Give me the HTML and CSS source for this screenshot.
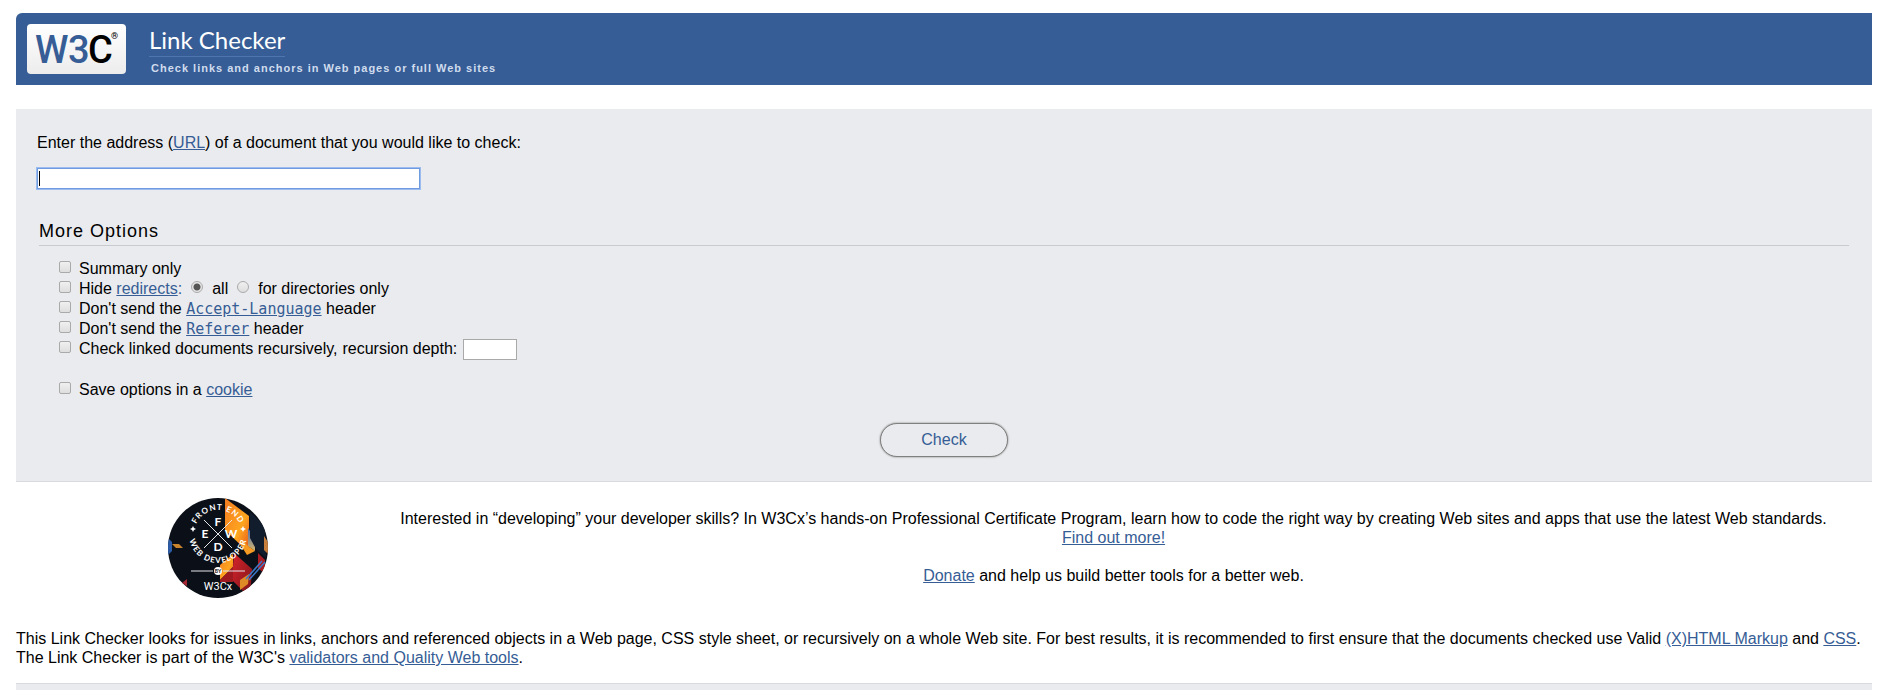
FILE: index.html
```html
<!DOCTYPE html>
<html lang="en">
<head>
  <meta charset="UTF-8">
  <title>W3C Link Checker</title>
  <link rel="stylesheet" href="styles.css">
</head>
<body>
  <header class="banner">
    <a class="logo" href="#" aria-label="W3C">
      <svg width="99" height="50" viewBox="0 0 99 50">
        <text class="logo-blue" x="8" y="39">W</text>
        <text class="logo-blue" x="41" y="39">3</text>
        <text class="logo-black" x="61" y="39">C</text>
        <text class="logo-reg" x="84" y="15">®</text>
      </svg>
    </a>
    <div class="heading">
      <h1><a href="#">Link Checker</a></h1>
      <p class="tagline">Check links and anchors in Web pages or full Web sites</p>
    </div>
  </header>

  <main>
    <form class="panel">
      <p class="address">
        <label for="uri">Enter the address (<a href="#">URL</a>) of a document that you would like to check:</label>
      </p>
      <input class="uri" type="text" id="uri">

      <fieldset class="options">
        <legend>More Options</legend>
        <div class="option">
          <input type="checkbox" id="summary">
          <label for="summary">Summary only</label>
        </div>
        <div class="option">
          <input type="checkbox" id="hide">
          <label for="hide">Hide <a href="#">redirects</a><span class="colon">:</span></label>
          <input type="radio" name="hide_type" id="hide_all" checked>
          <label for="hide_all">all</label>
          <input type="radio" name="hide_type" id="hide_dir">
          <label for="hide_dir">for directories only</label>
        </div>
        <div class="option">
          <input type="checkbox" id="no_lang">
          <label for="no_lang">Don't send the <a href="#"><code>Accept-Language</code></a> header</label>
        </div>
        <div class="option">
          <input type="checkbox" id="no_referer">
          <label for="no_referer">Don't send the <a href="#"><code>Referer</code></a> header</label>
        </div>
        <div class="option">
          <input type="checkbox" id="recursive">
          <label for="recursive">Check linked documents recursively,</label>
          <label class="depth-label" for="depth">recursion depth:</label>
          <input class="depth" type="text" id="depth">
        </div>
        <div class="option cookie">
          <input type="checkbox" id="cookie">
          <label for="cookie">Save options in a <a href="#">cookie</a></label>
        </div>
      </fieldset>

      <button class="submit" type="submit">Check</button>
    </form>

    <section class="promo">
      <a class="badge" href="#" aria-label="Front End Web Developer by W3Cx">
        <svg width="100" height="100" viewBox="0 0 100 100">
          <defs>
            <clipPath id="disc"><circle cx="50" cy="50" r="50"/></clipPath>
            <linearGradient id="flame" x1="0" y1="0" x2="1" y2="1">
              <stop offset="0" stop-color="#f47b20"/>
              <stop offset="0.6" stop-color="#ffa51f"/>
              <stop offset="1" stop-color="#e2501c"/>
            </linearGradient>
            <linearGradient id="sky" x1="0" y1="0" x2="0" y2="1">
              <stop offset="0" stop-color="#3d6bb5"/>
              <stop offset="1" stop-color="#d9b46a"/>
            </linearGradient>
            <linearGradient id="ruby" x1="0" y1="0" x2="1" y2="1">
              <stop offset="0" stop-color="#d8232a"/>
              <stop offset="1" stop-color="#7a141b"/>
            </linearGradient>
            <path id="ring-top" d="M26 36 A24 24 0 0 1 74 36"/>
            <path id="ring-bottom" d="M21 32 V36 A29 29 0 0 0 79 36 V32"/>
          </defs>
          <g clip-path="url(#disc)">
            <rect width="100" height="100" fill="#0b1018"/>
            <polygon points="57,0 81,18 81,55 57,32" fill="url(#flame)"/>
            <polygon points="80,30 87,40 87,53 80,48" fill="url(#sky)"/>
            <polygon points="82,14 97,28 98,60 88,51 82,40" fill="#111c2d"/>
            <polygon points="96,38 100,44 100,56 96,52" fill="#c87f3c"/>
            <polygon points="72,40 80,48 87,53 79,57 72,46" fill="#f59a23"/>
            <polygon points="52,67 65,56 65,69 52,82" fill="url(#flame)"/>
            <polygon points="66,55 84,71 82,100 64,82" fill="url(#ruby)"/>
            <polygon points="52,82 65,69 65,84 52,84" fill="#9e1920"/>
            <polygon points="90,55 97,62 97,76 90,70" fill="#a81d24"/>
            <polygon points="72,82 81,76 80,86 72,92" fill="#dd8a27"/>
            <path d="M78 81 L94 63 M81 82 L97 64" stroke="#3c78c8" stroke-width="1.500"/>
            <polygon points="0,40 4,44 4,53 0,57" fill="#2d5da8"/>
            <polygon points="4,46 11,46 15,50 8,50" fill="#c8842c"/>
            <polygon points="14,85 19,81 19,88" fill="#a32733"/>
            <path d="M36 22 L64 50 M64 22 L36 50 M23 73 H45 M55 73 H77" stroke="#e4e6ea" stroke-width="1"/>
            <circle cx="50" cy="73" r="4" fill="#fff"/>
            <polygon points="25,28 26,30 28,31 26,32 25,34 24,32 22,31 24,30" fill="#fff"/>
            <polygon points="75,28 76,30 78,31 76,32 75,34 74,32 72,31 74,30" fill="#fff"/>
          </g>
          <g class="badge-text">
            <text class="badge-ring"><textPath href="#ring-top" startOffset="50%">FRONT END</textPath></text>
            <text class="badge-ring"><textPath href="#ring-bottom" startOffset="50%">WEB DEVELOPER</textPath></text>
            <text class="badge-letter" x="50" y="28">F</text>
            <text class="badge-letter" x="37" y="40">E</text>
            <text class="badge-letter" x="63" y="40">W</text>
            <text class="badge-letter" x="50" y="53">D</text>
            <text class="badge-by" x="50" y="75">BY</text>
            <text class="badge-brand" x="50" y="92">W3Cx</text>
          </g>
        </svg>
      </a>
      <div class="promo-text">
        <p>Interested in “developing” your developer skills? In W3Cx’s hands-on Professional Certificate Program, learn how to code the right way by creating Web sites and apps that use the latest Web standards. <a href="#">Find out more!</a></p>
        <p><a href="#">Donate</a> and help us build better tools for a better web.</p>
      </div>
    </section>

    <p class="intro">
      This Link Checker looks for issues in links, anchors and referenced objects in a Web page, CSS style sheet, or recursively on a whole Web site. For best results, it is recommended to first ensure that the documents checked use Valid <a href="#">(X)HTML Markup</a> and <a href="#">CSS</a>. The Link Checker is part of the W3C's <a href="#">validators and Quality Web tools</a>.
    </p>
  </main>

  <footer class="footer"></footer>
</body>
</html>
```
FILE: styles.css
```css
* {
  box-sizing: border-box;
}

body {
  display: flex;
  flex-direction: column;
  min-height: 100vh;
  margin: 0;
  padding: 13px 15px 0 16px;
  background: #fff;
  color: #000;
  font-family: "Liberation Sans", Arial, sans-serif;
  font-size: 16px;
  line-height: 19px;
}

p {
  margin: 0;
}

a {
  color: #365d95;
}

/* banner */
.banner {
  display: flex;
  gap: 23px;
  height: 72px;
  padding: 11px;
  background: #365d95;
  border-top-left-radius: 6px;
}

.logo {
  flex: none;
  width: 99px;
  height: 50px;
  border-radius: 4px;
  background: linear-gradient(#fff, #ececec);
}

.logo svg {
  display: block;
}

.logo text {
  font-family: Roboto, sans-serif;
  font-size: 38px;
  font-weight: 500;
}

.logo .logo-blue {
  fill: #365d95;
}

.logo .logo-reg {
  font-size: 9px;
}

h1 {
  width: max-content;
  margin: 0;
  border-bottom: 1px solid #4f75ac;
  font-family: Lato, sans-serif;
  font-size: 24px;
  font-weight: normal;
  line-height: 32px;
}

h1 a {
  color: #fff;
  text-decoration: none;
}

.tagline {
  padding: 2px 0 0 2px;
  color: #d0dcee;
  font-size: 11px;
  font-weight: bold;
  letter-spacing: 1px;
}

/* form */
.panel {
  margin-top: 24px;
  padding: 24px 21px;
  background: #eaebee;
  border-bottom: 1px solid #d9dade;
}

.uri {
  display: block;
  width: 383px;
  height: 21px;
  margin: 16px 0 0;
  padding: 1px 2px;
  border: 1px solid #6f9be0;
  outline: 1px solid #9cbcf0;
  background: linear-gradient(#000, #000) 1px 2px / 1px 15px no-repeat #fff;
  font: inherit;
}

.options {
  margin: 32px 2px 0;
  padding: 0;
  border: 0;
}

.options legend {
  width: 100%;
  margin-bottom: 12px;
  padding: 0 0 4px;
  border-bottom: 1px solid #c9cacf;
  font-size: 18px;
  letter-spacing: 1px;
  line-height: 20px;
}

.option {
  display: flex;
  align-items: center;
  height: 20px;
  padding-left: 20px;
}

.option.cookie {
  margin-top: 21px;
}

.option input[type="checkbox"],
.option input[type="radio"] {
  appearance: none;
  width: 12px;
  height: 12px;
  margin: 0 8px 2px 0;
  border: 1px solid #aaa;
  border-radius: 2px;
  background: linear-gradient(#f0f0f0, #dedede);
}

.option input[type="radio"] {
  margin: 0 9px 2px;
  border-radius: 50%;
}

.option input[type="radio"]:checked {
  background: radial-gradient(circle, #555 3px, #e6e6e6 4px);
}

.colon {
  color: #365d95;
}

.depth-label {
  margin-left: 5px;
}

.option .depth {
  width: 54px;
  height: 21px;
  margin: 2px 0 0 6px;
  border: 1px solid #a9a9a9;
  background: #fff;
}

code {
  font-family: "DejaVu Sans Mono", monospace;
  font-size: 15px;
  line-height: 16px;
}

.submit {
  display: block;
  width: 128px;
  height: 34px;
  margin: 24px auto 0;
  padding: 0 0 2px;
  border: 1px solid #808080;
  border-radius: 17px;
  background: #eaebee;
  box-shadow: 0 0 2px #777;
  color: #365d95;
  font: inherit;
}

/* promo */
.promo {
  display: flex;
  padding: 16px 0 0 152px;
}

.badge {
  flex: none;
  height: 100px;
  margin-right: 87px;
}

.badge svg {
  display: block;
}

.badge-text {
  fill: #fff;
  font-family: Lato, sans-serif;
  font-weight: bold;
  text-anchor: middle;
}

.badge-ring {
  font-size: 8px;
  letter-spacing: 1px;
}

.badge-letter {
  font-size: 12px;
}

.badge-by {
  fill: #111;
  font-size: 5px;
}

.badge-brand {
  font-family: Roboto, sans-serif;
  font-size: 11px;
  font-weight: normal;
}

.promo-text {
  flex: 1;
  display: grid;
  align-content: start;
  gap: 19px;
  padding: 11px 40px 0;
  text-align: center;
}

.intro {
  margin-top: 31px;
}

.footer {
  flex: 1;
  margin-top: 16px;
  border-top: 1px solid #d9dade;
  background: #eaebee;
}
```
